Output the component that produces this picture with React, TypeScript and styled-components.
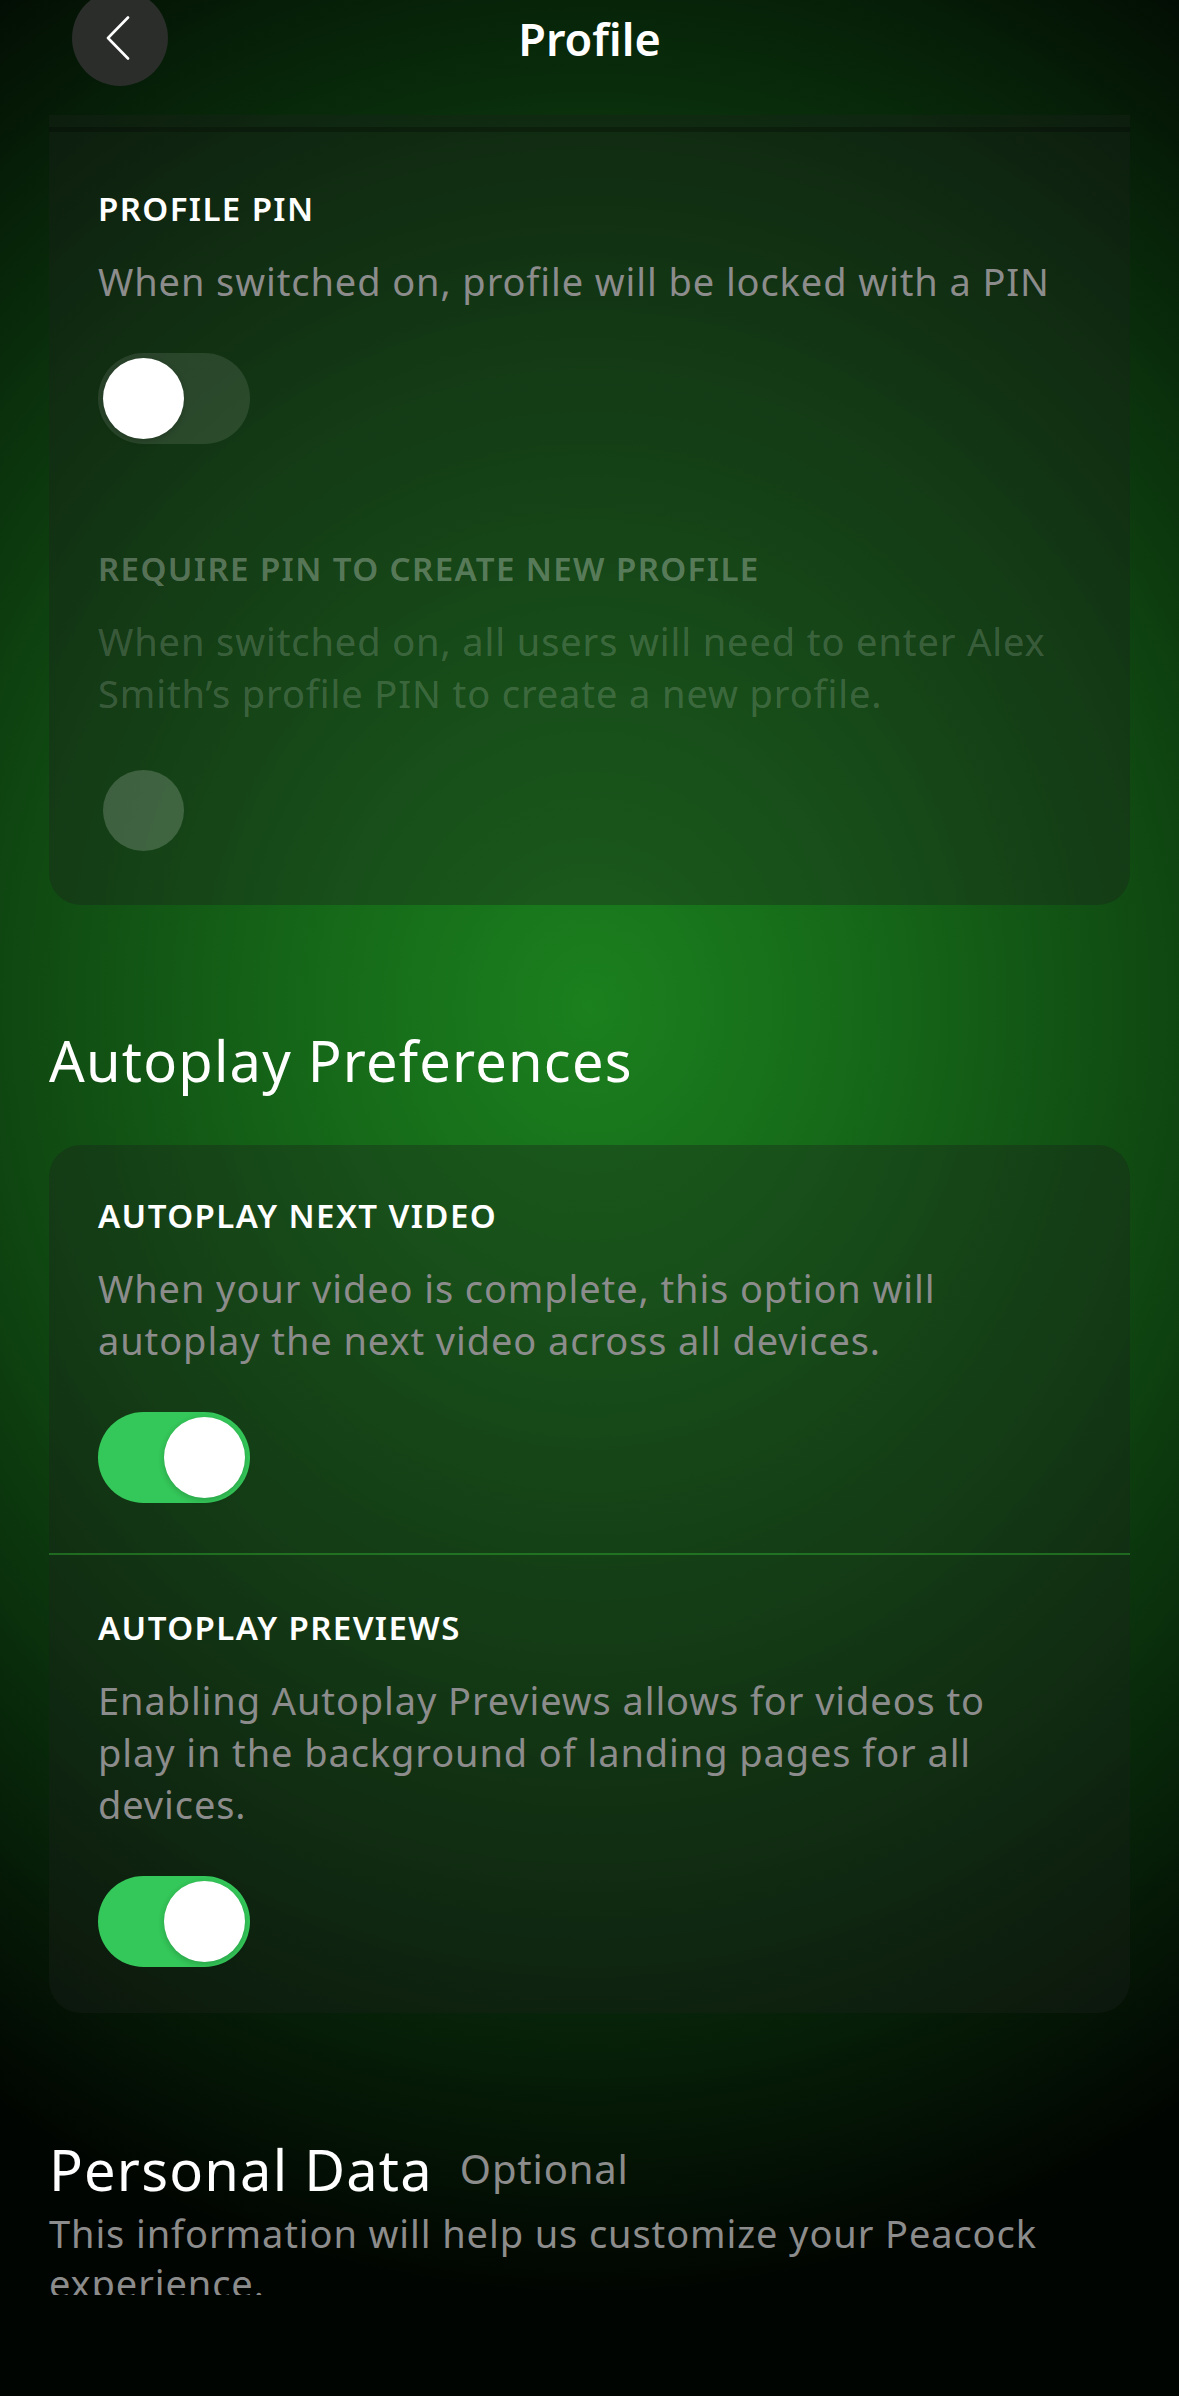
import styled, { createGlobalStyle } from 'styled-components';

const GlobalStyle = createGlobalStyle`
  html, body {
    margin: 0;
    padding: 0;
    background: #000;
  }
  * {
    box-sizing: border-box;
  }
  body {
    font-family: 'Noto Sans', 'Open Sans', sans-serif;
    -webkit-font-smoothing: antialiased;
  }
`;

type Setting = {
  title: string;
  desc: string;
  state: 'on' | 'off' | 'disabled';
};

const pinSettings: Setting[] = [
  {
    title: 'PROFILE PIN',
    desc: 'When switched on, profile will be locked with a PIN',
    state: 'off',
  },
  {
    title: 'REQUIRE PIN TO CREATE NEW PROFILE',
    desc: 'When switched on, all users will need to enter Alex Smith’s profile PIN to create a new profile.',
    state: 'disabled',
  },
];

const autoplaySettings: Setting[] = [
  {
    title: 'AUTOPLAY NEXT VIDEO',
    desc: 'When your video is complete, this option will autoplay the next video across all devices.',
    state: 'on',
  },
  {
    title: 'AUTOPLAY PREVIEWS',
    desc: 'Enabling Autoplay Previews allows for videos to play in the background of landing pages for all devices.',
    state: 'on',
  },
];

const SettingsCard = ({
  items,
  clipped,
  divided,
}: {
  items: Setting[];
  clipped?: boolean;
  divided?: boolean;
}) => (
  <Card $clipped={clipped}>
    {clipped && <CardLip />}
    {items.map((item, index) => (
      <Item
        key={item.title}
        $first={index === 0}
        $last={index === items.length - 1}
        $divided={divided}
      >
        <ItemTitle $disabled={item.state === 'disabled'}>{item.title}</ItemTitle>
        <ItemDesc $disabled={item.state === 'disabled'}>{item.desc}</ItemDesc>
        <Toggle $state={item.state}>
          <Knob $state={item.state} />
        </Toggle>
      </Item>
    ))}
  </Card>
);

const App = () => {
  return (
    <>
      <GlobalStyle />
      <Page>
        <Header>
          <BackButton type="button" aria-label="Back">
            <svg width="24" height="44" viewBox="0 0 24 44" fill="none">
              <path
                d="M22 1.5 L2 22 L22 42.5"
                stroke="#fff"
                strokeWidth="2.6"
                strokeLinecap="round"
                strokeLinejoin="round"
              />
            </svg>
          </BackButton>
          <Title>Profile</Title>
          <span />
        </Header>

        <Scroll>
          <SettingsCard items={pinSettings} clipped />

          <SectionHeading>Autoplay Preferences</SectionHeading>
          <SettingsCard items={autoplaySettings} divided />

          <PersonalRow>
            <PersonalHeading>Personal Data</PersonalHeading>
            <Optional>Optional</Optional>
          </PersonalRow>
          <PersonalDesc>
            This information will help us customize your Peacock experience.
          </PersonalDesc>
        </Scroll>

        <BottomSpace />
      </Page>
    </>
  );
};

export default App;

const Page = styled.div`
  width: 1179px;
  height: 2396px;
  display: flex;
  flex-direction: column;
  overflow: hidden;
  background: radial-gradient(
    ellipse 100% 56% at 50% 42%,
    #1b801e 0%,
    #166a19 22%,
    #104a12 48%,
    #08280a 72%,
    #010501 96%
  );
`;

const Header = styled.header`
  height: 115px;
  flex-shrink: 0;
  display: grid;
  grid-template-columns: 1fr auto 1fr;
  align-items: start;
  padding: 0 72px;
`;

const BackButton = styled.button`
  width: 96px;
  height: 96px;
  margin-top: -10px;
  border: none;
  border-radius: 50%;
  background: #2a2d2a;
  display: flex;
  align-items: center;
  justify-content: center;
  padding: 0 4px 0 0;
  cursor: pointer;
`;

const Title = styled.h1`
  margin: 0;
  padding-top: 10px;
  font-size: 45px;
  line-height: 57.6px;
  font-weight: 600;
  color: #fff;
`;

const Scroll = styled.main`
  flex: 1;
  overflow: hidden;
  padding: 0 49px;
`;

const BottomSpace = styled.div`
  height: 101px;
  flex-shrink: 0;
`;

const Card = styled.section<{ $clipped?: boolean }>`
  background: rgba(28, 34, 28, 0.36);
  border-radius: ${(p) => (p.$clipped ? '0 0 32px 32px' : '32px')};
  padding-bottom: ${(p) => (p.$clipped ? '3px' : '0')};
`;

const CardLip = styled.div`
  height: 17px;
  border-bottom: 5px solid rgba(0, 0, 0, 0.25);
  margin-bottom: 6px;
`;

const Item = styled.div<{ $first: boolean; $last: boolean; $divided?: boolean }>`
  padding: ${(p) => (p.$first ? '51px' : '53px')} 49px ${(p) => (p.$last ? '46px' : '50px')};
  border-top: ${(p) =>
    p.$first
      ? 'none'
      : `2px solid ${p.$divided ? 'rgba(45, 165, 45, 0.5)' : 'transparent'}`};
`;

const ItemTitle = styled.h3<{ $disabled: boolean }>`
  margin: 0;
  font-size: 33px;
  line-height: 40px;
  font-weight: 600;
  letter-spacing: 1.4px;
  color: ${(p) => (p.$disabled ? 'rgba(255, 255, 255, 0.3)' : '#fff')};
`;

const ItemDesc = styled.p<{ $disabled: boolean }>`
  margin: 26px 0 0;
  max-width: 975px;
  font-size: 38px;
  line-height: 52px;
  letter-spacing: 0.9px;
  color: ${(p) => (p.$disabled ? 'rgba(255, 255, 255, 0.18)' : '#8c8c8c')};
`;

const Toggle = styled.div<{ $state: 'on' | 'off' | 'disabled' }>`
  margin-top: 46px;
  width: 152px;
  height: 91px;
  border-radius: 46px;
  padding: 0 5px;
  display: flex;
  align-items: center;
  justify-content: ${(p) => (p.$state === 'on' ? 'flex-end' : 'flex-start')};
  background: ${(p) =>
    p.$state === 'on'
      ? '#34c759'
      : p.$state === 'off'
      ? 'rgba(255, 255, 255, 0.1)'
      : 'transparent'};
`;

const Knob = styled.div<{ $state: 'on' | 'off' | 'disabled' }>`
  width: 81px;
  height: 81px;
  border-radius: 50%;
  background: ${(p) => (p.$state === 'disabled' ? 'rgba(255, 255, 255, 0.18)' : '#fff')};
  box-shadow: ${(p) => (p.$state === 'disabled' ? 'none' : '0 2px 6px rgba(0, 0, 0, 0.2)')};
`;

const SectionHeading = styled.h2`
  margin: 122px 0 52px;
  font-size: 56px;
  line-height: 66px;
  font-weight: 400;
  letter-spacing: 1.2px;
  color: #fff;
`;

const PersonalRow = styled.div`
  margin-top: 123px;
  display: flex;
  align-items: center;
  gap: 27px;
`;

const PersonalHeading = styled.h2`
  margin: 0;
  font-size: 56px;
  line-height: 66px;
  font-weight: 400;
  letter-spacing: 1.2px;
  color: #fff;
`;

const Optional = styled.span`
  font-size: 40px;
  line-height: 48px;
  letter-spacing: 0.8px;
  color: #8c8c8c;
`;

const PersonalDesc = styled.p`
  margin: 6px 0 0;
  font-size: 38px;
  line-height: 50px;
  letter-spacing: 0.9px;
  color: #8c8c8c;
`;
